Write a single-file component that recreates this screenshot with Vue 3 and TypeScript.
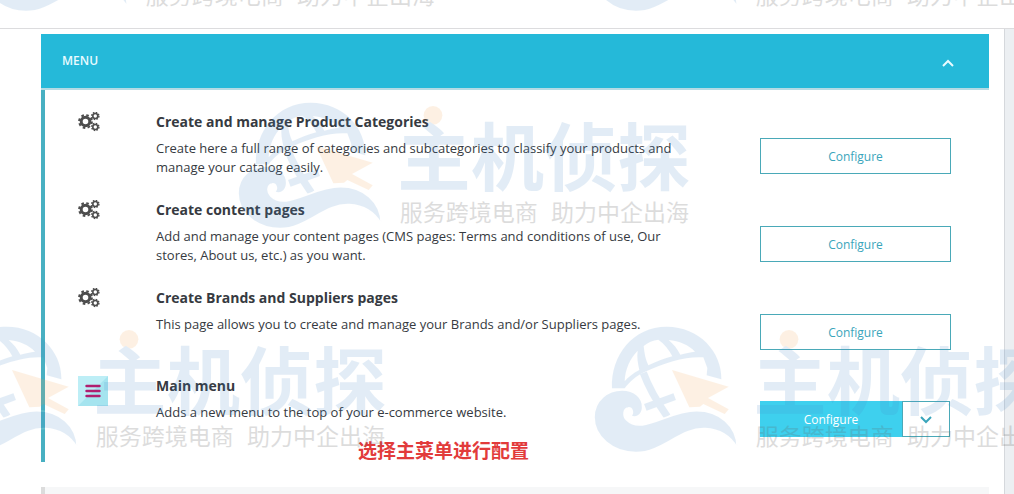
<script setup lang="ts">
import { ref } from 'vue'

interface ModuleRow {
  title: string
  description: string
  icon: 'gears' | 'menu'
  split: boolean
}

interface Mark {
  x: number
  y: number
}

const open = ref(true)

const rows: ModuleRow[] = [
  {
    title: 'Create and manage Product Categories',
    description: 'Create here a full range of categories and subcategories to classify your products and manage your catalog easily.',
    icon: 'gears',
    split: false,
  },
  {
    title: 'Create content pages',
    description: 'Add and manage your content pages (CMS pages: Terms and conditions of use, Our stores, About us, etc.) as you want.',
    icon: 'gears',
    split: false,
  },
  {
    title: 'Create Brands and Suppliers pages',
    description: 'This page allows you to create and manage your Brands and/or Suppliers pages.',
    icon: 'gears',
    split: false,
  },
  {
    title: 'Main menu',
    description: 'Adds a new menu to the top of your e-commerce website.',
    icon: 'menu',
    split: true,
  },
]

const marks: Mark[] = [
  { x: -20, y: -121 },
  { x: 590, y: -121 },
  { x: 234, y: 96 },
  { x: -70, y: 320 },
  { x: 590, y: 320 },
]
</script>

<template>
  <div class="page">
    <header class="topbar"></header>
    <div class="columns">
      <main class="content">
        <section class="panel">
          <h2 class="panel-head">
            <button type="button" class="toggle" :aria-expanded="open" @click="open = !open">
              <span>MENU</span>
              <svg class="chevron" viewBox="0 0 12 8" aria-hidden="true"><path d="M1 7 6 2l5 5" /></svg>
            </button>
          </h2>
          <div v-if="open" class="panel-body">
            <article v-for="row in rows" :key="row.title" class="row">
              <svg v-if="row.icon === 'gears'" class="gears" viewBox="0 0 22 20" aria-hidden="true">
                <g fill="none" stroke="#4d4d4d">
                  <circle cx="7.5" cy="9.5" r="4.3" stroke-width="3" />
                  <circle cx="7.5" cy="9.5" r="6.4" stroke-width="2" stroke-dasharray="2.6 2.427" />
                  <circle cx="17.3" cy="4" r="2.5" stroke-width="1.6" />
                  <circle cx="17.3" cy="4" r="3.6" stroke-width="1.4" stroke-dasharray="1.5 1.327" />
                  <circle cx="17.3" cy="15" r="2.5" stroke-width="1.6" />
                  <circle cx="17.3" cy="15" r="3.6" stroke-width="1.4" stroke-dasharray="1.5 1.327" />
                </g>
              </svg>
              <svg v-else class="menu-icon" viewBox="0 0 30 30" aria-hidden="true">
                <path d="M0 0h30v30H0z" fill="#bdeef6" />
                <path d="M30 0v30H0z" fill="#a5e4ef" />
                <path d="M8.500 10h13M8.500 15h13M8.500 20h13" stroke="#b01f70" stroke-width="2.4" stroke-linecap="round" />
              </svg>
              <div class="info">
                <h3>{{ row.title }}</h3>
                <p>{{ row.description }}</p>
              </div>
              <div v-if="row.split" class="split">
                <button type="button" class="btn primary">Configure</button>
                <button type="button" class="btn more" aria-label="More actions">
                  <svg class="chevron" viewBox="0 0 12 8" aria-hidden="true"><path d="m1 1 5 5 5-5" /></svg>
                </button>
              </div>
              <button v-else type="button" class="btn">Configure</button>
            </article>
          </div>
          <p class="note">选择主菜单进行配置</p>
        </section>
        <section class="next-panel"></section>
      </main>
      <aside class="gutter"></aside>
    </div>

    <svg
      v-for="(mark, i) in marks"
      :key="i"
      class="mark"
      viewBox="0 0 1410 420"
      :style="{ left: mark.x + 'px', top: mark.y + 'px' }"
      aria-hidden="true"
    >
      <g class="tint">
        <path
          d="M66 205C62 105 130 20 230 20c98 0 166 76 164 158L350 166l2-22-12-32c-50-4-112 14-178 45-25 12-42 28-58 48Z M104 184c10-12 25-24 44-34-4-20-8-38-5-58-22 22-38 56-39 92Z M161 78c2 22 6 42 14 58 26-12 48-20 72-27-10-20-25-38-42-50-16 2-32 8-44 19Z M236 60c14 12 26 26 35 44 16-4 30-7 44-9-18-20-48-32-79-35Z"
          fill="#4588c8"
          fill-rule="evenodd"
        />
        <path d="M160 158c16 44 40 86 72 132M166 262l88-32" fill="none" stroke="#4588c8" stroke-width="22" />
        <path d="m246 150 170 50-62 34 62 34-12 14-64-30-10 8-32 2Z" fill="#f7a24b" />
        <path
          d="M12 292c0-52 42-82 84-82 38 0 64 24 62 54-2 24-22 32-36 24 10-10 4-26-8-24-14 2-16 24-4 36 46 46 122-28 210-28 66 0 122 44 122 112-22-38-56-56-96-58-74-4-128 72-208 72C68 398 12 350 12 292Z"
          fill="#4588c8"
          stroke="#fff"
          stroke-width="5"
        />
        <circle cx="597" cy="58" r="28" fill="#f7a24b" />
        <text class="brand" x="490" y="266">主机侦探</text>
      </g>
      <g class="grey">
        <text class="slogan" x="497" y="375">服务跨境电商</text>
        <text class="slogan" x="951" y="375">助力中企出海</text>
      </g>
    </svg>
  </div>
</template>

<style>
body {
  margin: 0;
}
</style>

<style scoped>
.page {
  position: relative;
  display: flex;
  flex-direction: column;
  min-height: 100vh;
  overflow: hidden;
  background: #fff;
  color: #363a41;
  font-family: 'Open Sans', 'Noto Sans CJK SC', sans-serif;
}

.topbar {
  height: 28px;
  border-bottom: 1px solid #dcdcde;
}

.columns {
  display: flex;
  flex: 1;
}

.content {
  display: flex;
  flex: 1;
  flex-direction: column;
  gap: 25px;
  padding: 5px 15px 0 41px;
}

.gutter {
  width: 9px;
  border-left: 1px solid #d5d8dc;
  background: #eceff2;
}

.panel {
  position: relative;
  border-left: 4px solid #48b0c2;
}

.panel-head {
  margin: 0 0 0 -4px;
}

.toggle {
  display: flex;
  align-items: center;
  justify-content: space-between;
  width: 100%;
  height: 56px;
  padding: 0 35px 0 21px;
  border: 0;
  border-bottom: 2px solid #b4dbe4;
  background: #25b9d9;
  color: #e9fbff;
  font: 600 12px/18px 'Open Sans', sans-serif;
}

.chevron {
  width: 12px;
  height: 8px;
  fill: none;
  stroke: currentColor;
  stroke-width: 2;
}

.toggle .chevron {
  margin-top: 4px;
}

.panel-body {
  padding: 22px 38px 0 33px;
}

.row {
  display: grid;
  grid-template-columns: 78px minmax(0, 1fr) 191px;
  align-items: start;
  min-height: 88px;
}

.row:last-child {
  min-height: 86px;
}

.gears {
  width: 22px;
  height: 20px;
}

.menu-icon {
  width: 30px;
  height: 30px;
}

.info {
  padding-right: 80px;
}

h3 {
  margin: 0 0 7px;
  font-size: 14px;
  font-weight: 700;
  line-height: 20px;
}

.info p {
  margin: 0;
  font-size: 13px;
  line-height: 19px;
}

.btn {
  box-sizing: border-box;
  height: 36px;
  padding: 2px 0 0;
  border: 1px solid #4aa9b8;
  background: #fff;
  color: #3aa5bb;
  font: 400 12px/18px 'Open Sans', sans-serif;
}

.row > .btn,
.split {
  align-self: center;
}

.split {
  display: flex;
  padding-right: 1px;
}

.primary {
  flex: 1;
  border-color: #3ed0ee;
  background: #3ed0ee;
  color: #fff;
}

.more {
  width: 48px;
}

.note {
  position: absolute;
  bottom: -2px;
  left: 313px;
  margin: 0;
  color: #e23b3b;
  font: 700 19px/28px 'Noto Sans CJK SC', sans-serif;
}

.next-panel {
  flex: 1;
  border-left: 4px solid #dcdcdc;
  background: #f6f7f8;
}

.mark {
  position: absolute;
  width: 470px;
  height: 140px;
  pointer-events: none;
}

.tint {
  opacity: 0.15;
}

.grey {
  opacity: 0.22;
}

.brand {
  fill: #4588c8;
  font: 700 220px 'Noto Sans CJK SC', sans-serif;
}

.slogan {
  fill: #666;
  font: 400 69px 'Noto Sans CJK SC', sans-serif;
}
</style>
